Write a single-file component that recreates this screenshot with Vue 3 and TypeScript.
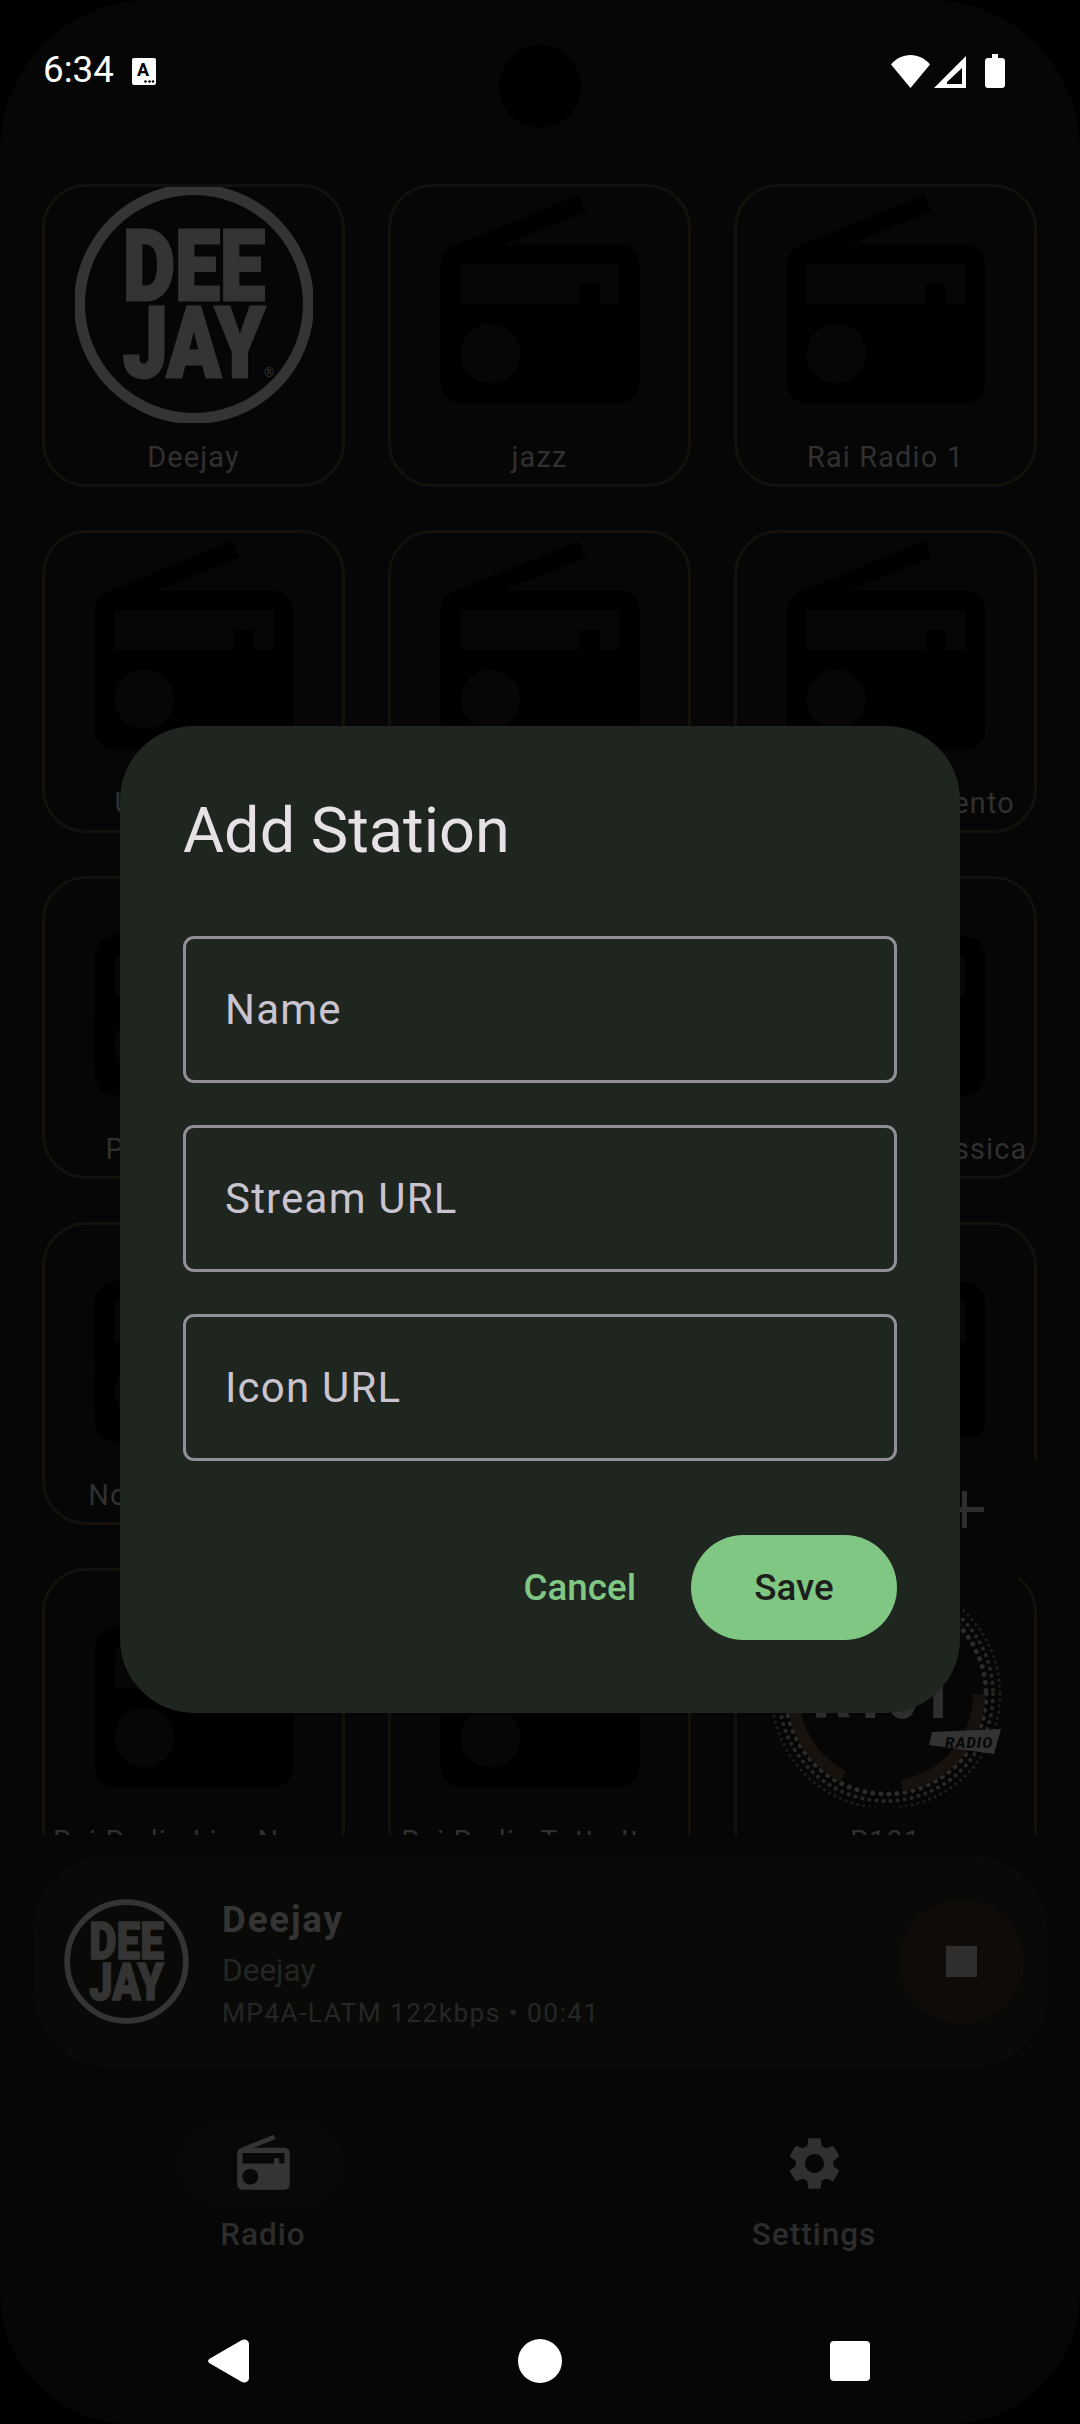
<script setup lang="ts">
interface Station { name: string; kind: 'deejay' | 'radio' | 'r101' }
const stations: Station[] = [
  { name: 'Deejay', kind: 'deejay' },
  { name: 'jazz', kind: 'radio' },
  { name: 'Rai Radio 1', kind: 'radio' },
  { name: 'Unity Radio', kind: 'radio' },
  { name: 'Rai Radio 2', kind: 'radio' },
  { name: 'Rai Radio Sorrento', kind: 'radio' },
  { name: 'Planet Radio', kind: 'radio' },
  { name: 'Rai Radio 3', kind: 'radio' },
  { name: 'Rai Radio 3 Classica', kind: 'radio' },
  { name: 'Nostalgia Rock', kind: 'radio' },
  { name: 'Rai Isoradio', kind: 'radio' },
  { name: 'Rai Gr Parlamento', kind: 'radio' },
  { name: 'Rai Radio Live Nap…', kind: 'radio' },
  { name: 'Rai Radio Tutta Ita…', kind: 'radio' },
  { name: 'R101', kind: 'r101' },
]
const radioPath = 'M3.24 6.15C2.51 6.43 2 7.17 2 8v12c0 1.1.89 2 2 2h16c1.11 0 2-.9 2-2V8c0-1.11-.89-2-2-2H8.3l8.26-3.34L15.88 1 3.24 6.15zM7 20c-1.66 0-3-1.34-3-3s1.34-3 3-3 3 1.34 3 3-1.34 3-3 3zm13-8h-2v-2h-2v2H4V8h16v4z'
const gearPath = 'M19.14 12.94c.04-.3.06-.61.06-.94 0-.32-.02-.64-.07-.94l2.03-1.58c.18-.14.23-.41.12-.61l-1.92-3.32c-.12-.22-.37-.29-.59-.22l-2.39.96c-.5-.38-1.03-.7-1.62-.94l-.36-2.54c-.04-.24-.24-.41-.48-.41h-3.84c-.24 0-.43.17-.47.41l-.36 2.54c-.59.24-1.13.57-1.62.94l-2.39-.96c-.22-.08-.47 0-.59.22L2.74 8.87c-.12.21-.08.47.12.61l2.03 1.58c-.05.3-.09.63-.09.94s.02.64.07.94l-2.03 1.58c-.18.14-.23.41-.12.61l1.92 3.32c.12.22.37.29.59.22l2.39-.96c.5.38 1.03.7 1.62.94l.36 2.54c.05.24.24.41.48.41h3.84c.24 0 .44-.17.47-.41l.36-2.54c.59-.24 1.13-.56 1.62-.94l2.39.96c.22.08.47 0 .59-.22l1.92-3.32c.12-.22.07-.47-.12-.61l-2.01-1.58zM12 15.6c-1.98 0-3.6-1.62-3.6-3.6s1.62-3.6 3.6-3.6 3.6 1.62 3.6 3.6-1.62 3.6-3.6 3.6z'
const fields: string[] = ['Name', 'Stream URL', 'Icon URL']
</script>

<template>
  <div class="frame">
    <header class="status">
      <div class="status-left">
        <span class="time">6:34</span>
        <svg class="a-icon" width="24" height="27" viewBox="0 0 24 27">
          <rect width="24" height="27" rx="2" fill="#fff" />
          <text x="11" y="18" class="a-letter" text-anchor="middle">A</text>
          <circle cx="13.5" cy="23.5" r="1.3" fill="#000" />
          <circle cx="17.5" cy="23.5" r="1.3" fill="#000" />
          <circle cx="21" cy="23.5" r="1.3" fill="#000" />
        </svg>
      </div>
      <div class="status-right">
        <svg width="39" height="33" viewBox="0 0 39 33"><path d="M0 9.5C5 3.5 12 0 19.5 0S34 3.5 39 9.5L19.5 33z" fill="#fff" /></svg>
        <svg width="32" height="32" viewBox="0 0 32 32"><path fill-rule="evenodd" d="M0 32 32 0v32zM13 28h15V12L13 26z" fill="#fff" /></svg>
        <svg class="battery" width="20" height="34" viewBox="0 0 20 34"><path d="M7 0h6v4h4c1.7 0 3 1.3 3 3v24c0 1.7-1.3 3-3 3H3c-1.7 0-3-1.300-3-3V7c0-1.700 1.300-3 3-3h4z" fill="#fff" /></svg>
      </div>
    </header>
    <div class="camera"></div>

    <main class="grid-clip">
      <div class="grid">
        <article v-for="s in stations" :key="s.name" class="card">
          <svg v-if="s.kind === 'radio'" class="art" viewBox="0 0 24 24"><path :d="radioPath" fill="#000" /></svg>
          <svg v-else-if="s.kind === 'deejay'" class="art" viewBox="0 0 238 238">
            <circle cx="119" cy="119" r="114.500" fill="none" stroke="#343434" stroke-width="11" />
            <text x="48" y="115" textLength="142" lengthAdjust="spacingAndGlyphs" class="logo-text">DEE</text>
            <text x="48" y="192" textLength="142" lengthAdjust="spacingAndGlyphs" class="logo-text">JAY</text>
            <text x="189" y="192" class="logo-reg">®</text>
          </svg>
          <svg v-else class="art" viewBox="0 0 238 238">
            <circle cx="119" cy="125" r="114" fill="none" stroke="#1e1f1b" stroke-width="3" stroke-linecap="round" stroke-dasharray="0.1 6" />
            <circle cx="119" cy="125" r="107" fill="none" stroke="#262823" stroke-width="4" stroke-linecap="round" stroke-dasharray="0.1 7" />
            <circle cx="119" cy="125" r="100" fill="none" stroke="#2a2c27" stroke-width="5" stroke-linecap="round" stroke-dasharray="0.1 8" />
            <circle cx="119" cy="125" r="93" fill="none" stroke="#17120e" stroke-width="12" stroke-dasharray="130 60 150 50 90 104" />
            <text x="46" y="149" textLength="140" lengthAdjust="spacingAndGlyphs" class="r101-text">R101</text>
            <path d="M165 163l69-3-7 25-65-9z" fill="#333" />
            <text x="178" y="179" class="r101-tag">RADIO</text>
          </svg>
          <span class="label">{{ s.name }}</span>
        </article>
      </div>
    </main>

    <section class="player">
      <svg class="player-logo" width="125" height="125" viewBox="0 0 238 238">
        <circle cx="119" cy="119" r="113" fill="none" stroke="#343434" stroke-width="11" />
        <text x="48" y="115" textLength="142" lengthAdjust="spacingAndGlyphs" class="logo-text">DEE</text>
        <text x="48" y="192" textLength="142" lengthAdjust="spacingAndGlyphs" class="logo-text">JAY</text>
      </svg>
      <div class="player-text">
        <div class="player-title">Deejay</div>
        <div class="player-sub">Deejay</div>
        <div class="player-meta">MP4A-LATM 122kbps • 00:41</div>
      </div>
      <button class="stop" type="button" aria-label="Stop"><span class="stop-square"></span></button>
    </section>

    <nav class="bottom-nav">
      <div class="nav-item">
        <div class="pill">
          <svg class="nav-icon" width="63" height="63" viewBox="0 0 24 24"><path :d="radioPath" fill="#343434" /></svg>
        </div>
        <span class="nav-label">Radio</span>
      </div>
      <div class="nav-item">
        <div class="pill plain">
          <svg class="nav-icon" width="63" height="63" viewBox="0 0 24 24"><path :d="gearPath" fill="#303030" /></svg>
        </div>
        <span class="nav-label">Settings</span>
      </div>
    </nav>

    <div class="sys-nav">
      <svg width="41" height="44" viewBox="0 0 41 44"><path d="M2 19.500 33.500 1.200C36.500-.6 41 1 41 5v34c0 4-4.500 5.600-7.500 3.800L2 24.500c-2.500-1.500-2.500-3.500 0-5z" fill="#fff" /></svg>
      <span class="sys-home"></span>
      <span class="sys-recent"></span>
    </div>

    <div class="fab"><span class="fab-h"></span><span class="fab-v"></span></div>

    <div class="dialog" role="dialog" aria-label="Add Station">
      <h2 class="dialog-title">Add Station</h2>
      <div class="fields">
        <input v-for="f in fields" :key="f" class="field" type="text" :placeholder="f" />
      </div>
      <div class="actions">
        <button class="btn-text" type="button">Cancel</button>
        <button class="btn-fill" type="button">Save</button>
      </div>
    </div>
  </div>
</template>

<style scoped>
.frame {
  position: relative;
  width: 1080px;
  height: 2424px;
  background: #060606;
  border-radius: 150px 150px 130px 130px;
  overflow: hidden;
  font-family: Roboto, "Liberation Sans", sans-serif;
  display: flex;
  flex-direction: column;
}
.status {
  flex: none;
  height: 184px;
  box-sizing: border-box;
  padding: 54px 75px 0 43px;
  display: flex;
  justify-content: space-between;
  align-items: flex-start;
}
.status-left { display: flex; align-items: center; gap: 18px; height: 34px; margin-top: -1px; }
.time { color: #fff; font-size: 36.75px; line-height: 34px; }
.a-icon { margin-top: 3px; }
.a-letter { font: 700 18px Roboto, sans-serif; fill: #000; }
.status-right { display: flex; align-items: flex-end; gap: 4px; height: 34px; }
.battery { margin-left: 15px; }
.camera {
  position: absolute;
  left: 499px;
  top: 45px;
  width: 82px;
  height: 83px;
  border-radius: 50%;
  background: #000;
}
.grid-clip { flex: none; height: 1651px; overflow: hidden; }
.grid {
  display: grid;
  grid-template-columns: repeat(3, 303px);
  grid-auto-rows: 303px;
  gap: 43px;
  padding: 0 42px;
}
.card {
  box-sizing: border-box;
  border: 3px solid #14110d;
  border-radius: 44px;
  display: flex;
  flex-direction: column;
  align-items: center;
  overflow: hidden;
}
.art { flex: none; width: 238px; height: 238px; margin-top: -2px; }
.logo-text { font: 900 98px Roboto, sans-serif; fill: #343434; stroke: #343434; stroke-width: 3px; }
.logo-reg { font: 400 13px Roboto, sans-serif; fill: #343434; }
.r101-text { font: 900 82px Roboto, sans-serif; fill: #2e2e2e; }
.r101-tag { font: italic 900 15px Roboto, sans-serif; fill: #080808; letter-spacing: 1px; }
.label {
  margin-top: 17px;
  font-size: 28.9px;
  line-height: 34px;
  letter-spacing: 1.15px;
  color: #303030;
  text-align: center;
  white-space: nowrap;
}
.player {
  flex: none;
  box-sizing: border-box;
  margin: 21px 32px 0 33px;
  height: 211px;
  border-radius: 74px;
  background: #090908;
  display: flex;
  align-items: center;
  padding: 0 24px 0 31px;
}
.player-logo { flex: none; }
.player-text { flex: 1; margin-left: 35px; display: flex; flex-direction: column; margin-top: 3px; }
.player-title { font-size: 36.75px; line-height: 48px; font-weight: 700; letter-spacing: 1.8px; color: #343434; margin-left: -2px; }
.player-sub { font-size: 31.5px; line-height: 42px; margin-top: 6px; color: #232623; margin-left: -2px; }
.player-meta { font-size: 26.25px; line-height: 36px; margin-top: 3px; letter-spacing: 1.45px; color: #252725; margin-left: -2px; }
.stop {
  flex: none;
  width: 125px;
  height: 125px;
  border: 0;
  padding: 0;
  border-radius: 50%;
  background: #0f0b08;
  display: flex;
  align-items: center;
  justify-content: center;
}
.stop-square { width: 31px; height: 31px; background: #302f2d; }
.bottom-nav {
  flex: none;
  margin-top: 55px;
  padding-left: 179px;
  display: flex;
  gap: 383px;
}
.nav-item { width: 168px; display: flex; flex-direction: column; align-items: center; }
.pill {
  width: 168px;
  height: 84px;
  border-radius: 42px;
  background: #080807;
  display: flex;
  align-items: center;
  justify-content: center;
}
.pill.plain { background: transparent; }
.nav-icon { margin-top: -2px; }
.nav-label {
  margin-top: 8px;
  font-size: 31.5px;
  line-height: 42px;
  font-weight: 500;
  letter-spacing: 1px;
  color: #2c2c2c;
}
.sys-nav {
  position: absolute;
  left: 208px;
  top: 2339px;
  width: 662px;
  height: 44px;
  display: flex;
  align-items: center;
  justify-content: space-between;
}
.sys-home { width: 44px; height: 44px; border-radius: 50%; background: #fff; }
.sys-recent { width: 40px; height: 40px; border-radius: 4px; background: #fff; }
.fab {
  position: absolute;
  left: 891px;
  top: 1436px;
  width: 148px;
  height: 148px;
  border-radius: 42px;
  background: #060606;
}
.fab-h, .fab-v { position: absolute; background: #2e2e2e; }
.fab-h { left: 56px; top: 71px; width: 37px; height: 5px; }
.fab-v { left: 71px; top: 55px; width: 5px; height: 37px; }
.dialog {
  position: absolute;
  left: 120px;
  top: 726px;
  width: 840px;
  box-sizing: border-box;
  padding: 63px 63px 73px;
  border-radius: 74px;
  background: #1f2620;
}
.dialog-title {
  margin: 0;
  font-size: 63px;
  line-height: 84px;
  font-weight: 400;
  color: #e6e1e5;
}
.fields { margin-top: 63px; display: flex; flex-direction: column; gap: 42px; }
.field {
  box-sizing: border-box;
  width: 714px;
  height: 147px;
  padding: 0 39px;
  border: 3px solid #938f99;
  border-radius: 11px;
  background: transparent;
  outline: none;
  font-family: Roboto, sans-serif;
  font-size: 42px;
  letter-spacing: 1.2px;
  color: #cac4d0;
}
.field::placeholder { color: #cac4d0; opacity: 1; }
.actions { margin-top: 74px; display: flex; justify-content: flex-end; align-items: center; gap: 23px; }
.btn-text, .btn-fill {
  height: 105px;
  border: 0;
  font-family: Roboto, sans-serif;
  font-size: 36.75px;
  font-weight: 500;
  letter-spacing: 0;
  border-radius: 53px;
}
.btn-text { padding: 0 32px; background: transparent; color: #81c784; }
.btn-fill { width: 206px; background: #81c784; color: #1c1f1b; }
</style>

<style>
html, body { margin: 0; background: #000; }
</style>
